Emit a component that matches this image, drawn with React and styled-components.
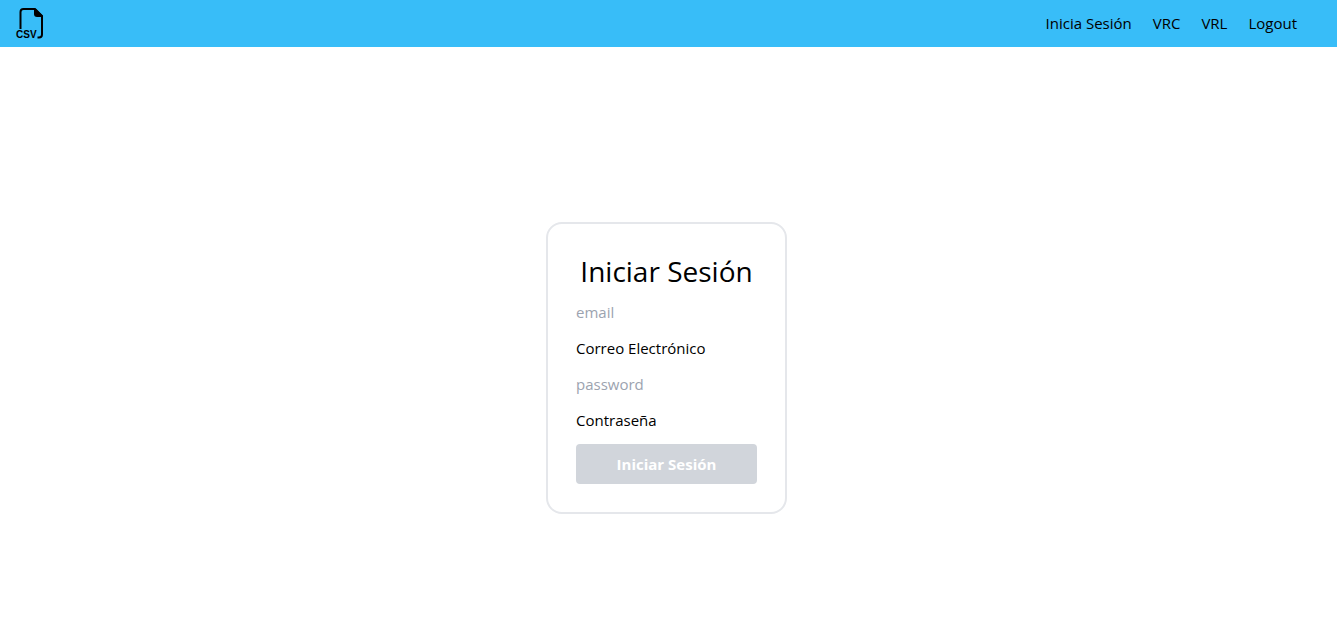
import React from "react";
import styled, { createGlobalStyle } from "styled-components";

const GlobalStyle = createGlobalStyle`
  *, *::before, *::after { box-sizing: border-box; }
  body {
    margin: 0;
    background: #fff;
    color: #000;
    font-family: "Segoe UI", "Open Sans", "Noto Sans", sans-serif;
    font-size: 15px;
    line-height: 24px;
  }
`;

const Header = styled.header`
  display: flex;
  align-items: center;
  justify-content: space-between;
  height: 47px;
  padding: 0 40px 2px 13px;
  background: #38bdf8;
`;

const HomeLink = styled.a`
  display: flex;
  color: #000;
`;

const Logo = styled.svg`
  width: 32px;
  height: 32px;
  font-family: "Liberation Sans", Arial, sans-serif;
  font-size: 10px;
  font-weight: 700;
`;

const Nav = styled.nav`
  display: flex;
  gap: 21px;
`;

const NavLink = styled.a`
  color: #000;
  text-decoration: none;
`;

const Main = styled.main`
  display: flex;
  justify-content: center;
  padding: 175px 20px 32px 16px;
`;

const Card = styled.form`
  display: flex;
  flex-direction: column;
  gap: 12px;
  width: 241px;
  padding: 28px;
  border: 2px solid #e5e7eb;
  border-radius: 16px;
`;

const Title = styled.h1`
  margin: 0;
  padding-top: 2px;
  font-size: 28px;
  font-weight: 400;
  line-height: 34px;
  text-align: center;
  white-space: nowrap;
`;

const Input = styled.input`
  width: 100%;
  height: 24px;
  padding: 0;
  border: 0;
  background: transparent;
  color: inherit;
  font: inherit;
  &::placeholder { color: #9ca3af; opacity: 1; }
`;

const SubmitButton = styled.button`
  height: 40px;
  padding: 8px 16px;
  border: 0;
  border-radius: 4px;
  background: #d1d5db;
  color: #fff;
  font: inherit;
  font-weight: 700;
`;

export default function App() {
  return (
    <>
      <GlobalStyle />
      <Header>
        <HomeLink href="#" aria-label="CSV">
          <Logo viewBox="0 0 32 32">
            <path d="M7.5 22V5Q7.5 2 10.5 2H22L29 9V27.5Q29 30.500 26 30.500H24.5" fill="none" stroke="currentColor" strokeWidth="2" />
            <path d="M21 2H23L30 9V10H24Q21 10 21 7Z" fill="currentColor" />
            <text x="3" y="31" fill="currentColor">CSV</text>
          </Logo>
        </HomeLink>
        <Nav>
          <NavLink href="#login">Inicia Sesión</NavLink>
          <NavLink href="#vrc">VRC</NavLink>
          <NavLink href="#vrl">VRL</NavLink>
          <NavLink href="#logout">Logout</NavLink>
        </Nav>
      </Header>
      <Main>
        <Card onSubmit={(event) => event.preventDefault()}>
          <Title>Iniciar Sesión</Title>
          <Input id="email" type="email" placeholder="email" />
          <label htmlFor="email">Correo Electrónico</label>
          <Input id="password" type="password" placeholder="password" />
          <label htmlFor="password">Contraseña</label>
          <SubmitButton type="submit">Iniciar Sesión</SubmitButton>
        </Card>
      </Main>
    </>
  );
}
